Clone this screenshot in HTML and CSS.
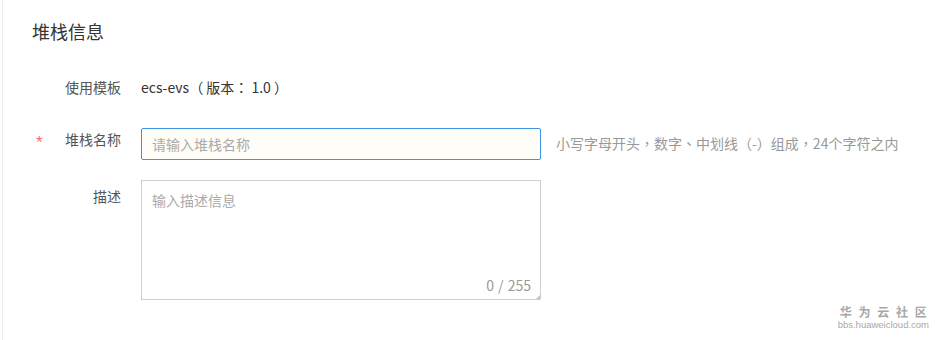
FILE: index.html
```html
<!DOCTYPE html>
<html lang="zh-CN">
<head>
<meta charset="utf-8">
<title>堆栈信息</title>
<link rel="stylesheet" href="styles.css">
</head>
<body>
<div class="page">
  <h2 class="title">堆栈信息</h2>
  <div class="form">
    <div class="row row-template">
      <div class="label"><span class="text">使用模板</span></div>
      <div class="value" lang="zh-TW">ecs-evs（ 版本： 1.0 ）</div>
    </div>
    <div class="row row-name">
      <div class="label"><span class="star">*</span><span class="text">堆栈名称</span></div>
      <input class="input" type="text" placeholder="请输入堆栈名称">
      <div class="hint" lang="zh-TW">小写字母开头，数字、中划线（-）组成，24个字符之内</div>
    </div>
    <div class="row row-desc">
      <div class="label"><span class="text">描述</span></div>
      <div class="textarea-wrap">
        <textarea class="textarea" placeholder="输入描述信息"></textarea>
        <span class="counter">0 / 255</span>
        <span class="grip"></span>
      </div>
    </div>
  </div>
  <div class="watermark">
    <div class="wm-cn">华 为 云 社 区</div>
    <div class="wm-url">bbs.huaweicloud.com</div>
  </div>
</div>
</body>
</html>
```
FILE: styles.css
```css
html, body {
  margin: 0;
  padding: 0;
  background: #fff;
}
body {
  font-family: "Noto Sans CJK SC", sans-serif;
  font-size: 14px;
  color: #333;
}
.page {
  position: relative;
  margin-left: 2px;
  border-left: 1px solid #ececec;
  height: 340px;
  box-sizing: border-box;
}
.title {
  margin: 0;
  padding: 19px 0 0 29px;
  font-size: 18px;
  line-height: 24px;
  font-weight: normal;
  color: #333;
}
.form {
  margin-top: 34px;
}
.row {
  display: grid;
  grid-template-columns: 138px 400px auto;
  align-items: start;
}
.label {
  display: flex;
  box-sizing: border-box;
  padding: 0 20px 0 33px;
  line-height: 20px;
  color: #555;
}
.label .text {
  margin-left: auto;
}
.star {
  color: #f07070;
  font-family: "Liberation Sans", sans-serif;
  font-size: 17px;
  line-height: 20px;
  position: relative;
  top: 4px;
}
.value {
  font-family: "Noto Sans CJK TC", "Noto Sans CJK SC", sans-serif;
  line-height: 20px;
  color: #333;
  white-space: pre;
}
.row-template {
  margin-bottom: 31px;
}
.row-name {
  margin-bottom: 20px;
}
.row-name .label {
  padding-top: 1px;
}
.input {
  box-sizing: border-box;
  width: 400px;
  height: 32px;
  margin: 0;
  padding: 0 10px;
  border: 1px solid #3f94e4;
  border-radius: 2px;
  background: #fffdf7;
  font-family: inherit;
  font-size: 14px;
  color: #333;
  outline: none;
}
.input::placeholder,
.textarea::placeholder {
  color: #aaa;
}
.hint {
  font-family: "Noto Sans CJK TC", "Noto Sans CJK SC", sans-serif;
  padding: 5px 0 0 15px;
  line-height: 20px;
  color: #999;
  white-space: nowrap;
}
.row-desc .label {
  padding-top: 6px;
}
.textarea-wrap {
  position: relative;
  width: 400px;
  height: 120px;
}
.textarea {
  display: block;
  box-sizing: border-box;
  width: 400px;
  height: 120px;
  margin: 0;
  padding: 9px 10px;
  border: 1px solid #cfcfcf;
  border-radius: 0;
  font-family: inherit;
  font-size: 14px;
  line-height: 20px;
  color: #333;
  resize: none;
  outline: none;
}
.counter {
  position: absolute;
  right: 9px;
  bottom: 5px;
  padding: 0 1px;
  line-height: 20px;
  color: #999;
  background: #fff;
  word-spacing: 1px;
}
.grip {
  position: absolute;
  right: 1px;
  bottom: 1px;
  width: 0;
  height: 0;
  border-left: 4px solid transparent;
  border-bottom: 4px solid #c4c4c4;
}
.watermark {
  position: absolute;
  right: 9px;
  bottom: 9px;
  text-align: center;
  color: #a8a8a8;
}
.wm-cn {
  font-size: 12px;
  line-height: 14px;
  font-weight: bold;
  letter-spacing: 2px;
  margin-right: -2px;
}
.wm-url {
  font-family: "Liberation Sans", sans-serif;
  font-size: 9.5px;
  line-height: 12px;
}
```
